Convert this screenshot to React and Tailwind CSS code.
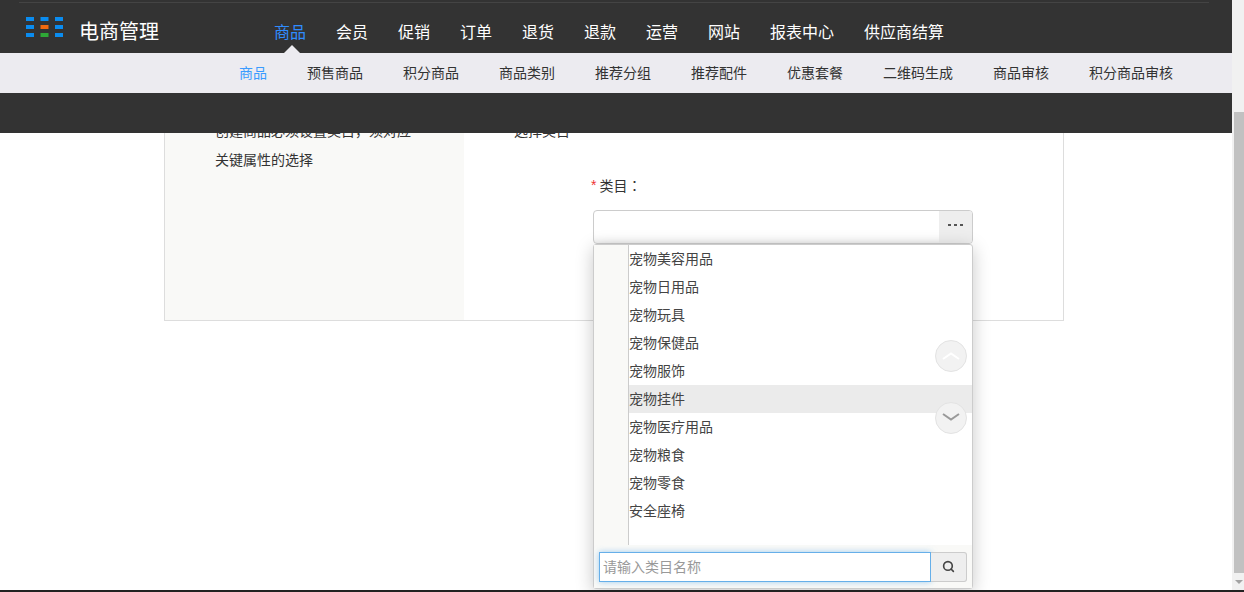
import React from 'react'
import { Search } from 'lucide-react'

const mainNav = [
  { label: '商品', width: 'w-[62px]', active: true },
  { label: '会员', width: 'w-[62px]' },
  { label: '促销', width: 'w-[62px]' },
  { label: '订单', width: 'w-[62px]' },
  { label: '退货', width: 'w-[62px]' },
  { label: '退款', width: 'w-[62px]' },
  { label: '运营', width: 'w-[62px]' },
  { label: '网站', width: 'w-[62px]' },
  { label: '报表中心', width: 'w-[94px]' },
  { label: '供应商结算', width: 'w-[112px]' },
]

const subNav = [
  { label: '商品', width: 'w-[68px]', active: true },
  { label: '预售商品', width: 'w-[96px]' },
  { label: '积分商品', width: 'w-[96px]' },
  { label: '商品类别', width: 'w-[96px]' },
  { label: '推荐分组', width: 'w-[96px]' },
  { label: '推荐配件', width: 'w-[96px]' },
  { label: '优惠套餐', width: 'w-[96px]' },
  { label: '二维码生成', width: 'w-[110px]' },
  { label: '商品审核', width: 'w-[96px]' },
  { label: '积分商品审核', width: 'w-[132px]' },
]

const categories = ['宠物美容用品', '宠物日用品', '宠物玩具', '宠物保健品', '宠物服饰', '宠物挂件', '宠物医疗用品', '宠物粮食', '宠物零食', '安全座椅']

function Logo() {
  const cols = ['#0a8cf0', '#0a8cf0', '#0a8cf0']
  return (
    <svg width="38" height="20" viewBox="0 0 38 20" className="shrink-0">
      {cols.map((c, i) => (
        <g key={i}>
          <rect x={i * 14.5} y="0" width="8" height="4" fill={c} />
          <rect x={i * 14.5} y="8" width="8" height="4" fill={i === 1 ? '#f0690f' : c} />
          <rect x={i * 14.5} y="16" width="8" height="4" fill={i === 1 ? '#2ea836' : c} />
        </g>
      ))}
    </svg>
  )
}

function Header() {
  return (
    <div className="h-[133px] shrink-0 bg-[#333333]">
      <div className="h-[53px] pl-[19px] pr-[23px] pt-[2px]">
        <div className="h-px bg-[#444444]" />
        <div className="flex items-start">
          <div className="pl-[7px] pt-[14px]">
            <Logo />
          </div>
          <div className="w-[210px] pl-[15px] pt-[15px] text-[20px] leading-[28px] text-white">电商管理</div>
          <div className="flex pt-[18px]">
            {mainNav.map(n => (
              <div key={n.label} className={`relative ${n.width} text-[16px] leading-[24px] ${n.active ? 'text-[#2f8cff]' : 'text-white'}`}>
                {n.label}
                {n.active && (
                  <div className="absolute left-[7px] top-[24px] h-0 w-0 border-x-[11px] border-b-[11px] border-x-transparent border-b-[#ecebf0]" />
                )}
              </div>
            ))}
          </div>
        </div>
      </div>
      <div className="flex h-10 items-center bg-[#ecebf0] pl-[239px]">
        {subNav.map(n => (
          <div key={n.label} className={`${n.width} shrink-0 text-[14px] ${n.active ? 'text-[#3a9bff]' : 'text-[#333333]'}`}>
            {n.label}
          </div>
        ))}
      </div>
    </div>
  )
}

function Dropdown() {
  return (
    <div className="absolute left-[593px] top-[111px] z-10 flex h-[345px] w-[380px] flex-col rounded-[3px] border border-[#cccccc] bg-white shadow-[0_4px_18px_rgba(0,0,0,0.22)]">
      <div className="relative flex min-h-0 flex-1">
        <div className="w-[35px] shrink-0 border-r border-[#cccccc] bg-[#f9f9f7]" />
        <div className="flex-1">
          {categories.map(c => (
            <div key={c} className={`h-7 text-[14px] leading-[28px] text-[#444444] ${c === '宠物挂件' ? 'bg-[#ebebeb]' : ''}`}>
              {c}
            </div>
          ))}
        </div>
        <div className="absolute left-[341px] top-[95px] flex h-8 w-8 items-center justify-center rounded-full border border-[#e3e3e3] bg-[#f2f2f2]">
          <svg width="18" height="8" viewBox="0 0 18 8" fill="none" stroke="#ffffff" strokeWidth="2">
            <path d="M1 7 L9 1.5 L17 7" />
          </svg>
        </div>
        <div className="absolute left-[341px] top-[157px] flex h-8 w-8 items-center justify-center rounded-full border border-[#e3e3e3] bg-[#f2f2f2]">
          <svg width="18" height="8" viewBox="0 0 18 8" fill="none" stroke="#999999" strokeWidth="2" className="mb-[3px]">
            <path d="M1 1 L9 6.5 L17 1" />
          </svg>
        </div>
      </div>
      <div className="flex h-[43px] shrink-0 bg-[#f9f9f7] pl-[5px] pt-[7px]">
        <input
          readOnly
          placeholder="请输入类目名称"
          className="h-[30px] w-[332px] border border-[#66afe9] bg-white px-[3px] text-[14px] text-[#333333] shadow-[0_0_6px_rgba(102,175,233,0.6)] outline-none placeholder:text-[#999999]"
        />
        <div className="flex h-[30px] w-[36px] items-center justify-center rounded-r-[3px] border border-l-0 border-[#cccccc] bg-[#eeeeee]">
          <Search size={13} strokeWidth={3} className="mb-[2px] text-[#444444]" />
        </div>
      </div>
    </div>
  )
}

function Content() {
  return (
    <div className="relative min-h-0 flex-1 overflow-hidden bg-white">
      <div className="relative ml-[164px] mt-[-40px] flex h-[228px] w-[900px] border border-[#dddddd]">
        <div className="w-[299px] shrink-0 bg-[#f9f9f7] pl-[50px] pt-[23px] text-[14px] leading-[28px] text-[#333333]">
          <div>创建商品必须设置类目，须对应</div>
          <div className="mt-[1px]">关键属性的选择</div>
        </div>
        <div className="pl-[50px] pt-[23px] text-[14px] leading-[28px] text-[#333333]">
          <div>选择类目</div>
          <div className="mt-[28px] flex pl-[77px] leading-[24px]">
            <span className="mr-[3px] text-[#e33]">*</span>
            <span>类目<span className="font-['Noto_Sans_CJK_TC']">：</span></span>
          </div>
          <div className="ml-[79px] mt-[12px] flex h-[34px] w-[380px] overflow-hidden rounded-[4px] border border-[#cccccc] shadow-[inset_0_-8px_8px_-8px_rgba(0,0,0,0.12)]">
            <div className="flex-1" />
            <div className="flex w-[33px] items-center justify-center gap-[3px] bg-[#eeeeee] pb-[5px]">
              <span className="h-[2px] w-[3px] bg-[#555555]" />
              <span className="h-[2px] w-[3px] bg-[#555555]" />
              <span className="h-[2px] w-[3px] bg-[#555555]" />
            </div>
          </div>
        </div>
      </div>
      <Dropdown />
    </div>
  )
}

function Scrollbar() {
  return (
    <div className="flex w-3 shrink-0 flex-col bg-[#f1f1f1] pl-[2px] pt-[112px]">
      <div className="h-[461px] bg-[#c1c1c1]" />
      <div className="flex flex-1 items-center justify-center">
        <div className="h-0 w-0 border-x-[4px] border-t-[4px] border-x-transparent border-t-[#a3a3a3]" />
      </div>
    </div>
  )
}

export default function App() {
  return (
    <div className="flex h-[592px] w-[1244px] flex-col overflow-hidden bg-white font-['Liberation_Sans','Noto_Sans_CJK_SC',sans-serif]">
      <div className="flex min-h-0 flex-1">
        <div className="flex min-w-0 flex-1 flex-col">
          <Header />
          <Content />
        </div>
        <Scrollbar />
      </div>
      <div className="h-[2px] shrink-0 bg-[#222222]" />
    </div>
  )
}
